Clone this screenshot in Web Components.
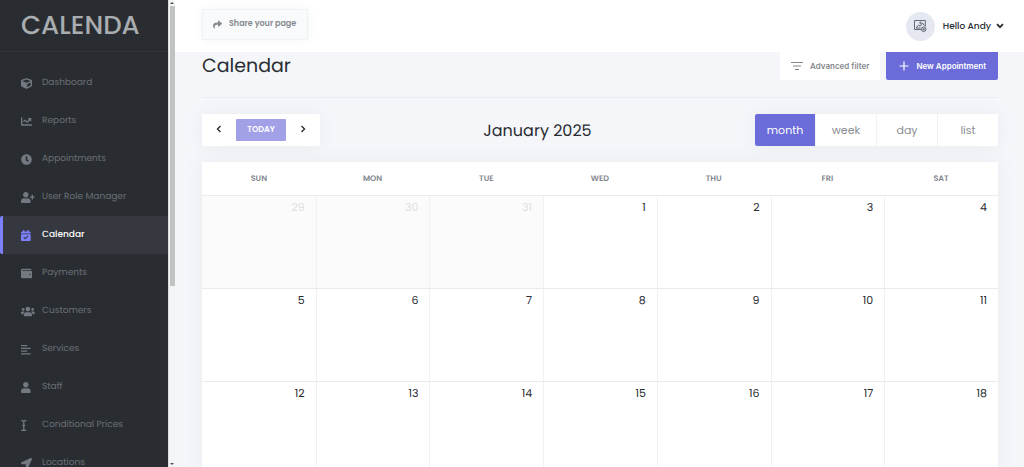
<!DOCTYPE html>
<html lang="en">
<head>
<meta charset="utf-8">
<meta name="viewport" content="width=device-width, initial-scale=1">
<title>Calendar</title>
<style>
    body {
        margin: 0;
        font-family: Poppins, Inter, "Open Sans", sans-serif;
        font-size: 9px;
        color: #292d32;
        background: #f4f6fa;
        text-rendering: geometricPrecision;
    }
</style>
</head>
<body>
<app-shell>
    <side-bar slot="sidebar">
        <nav-item icon="cube">Dashboard</nav-item>
        <nav-item icon="chart">Reports</nav-item>
        <nav-item icon="clock">Appointments</nav-item>
        <nav-item icon="userPlus">User Role Manager</nav-item>
        <nav-item icon="calendar" active>Calendar</nav-item>
        <nav-item icon="wallet">Payments</nav-item>
        <nav-item icon="users">Customers</nav-item>
        <nav-item icon="align">Services</nav-item>
        <nav-item icon="user">Staff</nav-item>
        <nav-item icon="cursor">Conditional Prices</nav-item>
        <nav-item icon="arrow">Locations</nav-item>
    </side-bar>
    <top-bar slot="header">Hello Andy</top-bar>
    <page-title>
        Calendar
        <action-button slot="actions" icon="filter">Advanced filter</action-button>
        <action-button slot="actions" icon="plus" primary>New Appointment</action-button>
    </page-title>
    <calendar-toolbar>January 2025</calendar-toolbar>
    <month-grid first="2024-12-29" month="1"></month-grid>
</app-shell>

<script>
const icons = {
    cube: ['0 0 512 512', '<path d="M239.1 6.3l-208 78c-18.7 7-31.1 25-31.1 45v225.1c0 18.2 10.3 34.8 26.5 42.9l208 104c13.5 6.8 29.4 6.8 42.9 0l208-104c16.3-8.1 26.5-24.8 26.5-42.9V129.3c0-20-12.4-37.9-31.1-44.9l-208-78C262 2.2 250 2.2 239.1 6.3zM256 68.4l192 72v1.1l-192 78-192-78v-1.1l192-72zm32 356V275.5l160-65v133.9l-160 80z"/>'],
    chart: ['0 0 512 512', '<path d="M496 384H64V80c0-8.84-7.16-16-16-16H16C7.16 64 0 71.16 0 80v336c0 17.67 14.33 32 32 32h464c8.84 0 16-7.16 16-16v-32c0-8.84-7.16-16-16-16zM464 96H345.94c-21.38 0-32.09 25.85-16.97 40.97l32.4 32.4L288 242.75l-73.37-73.37c-12.5-12.5-32.76-12.5-45.25 0l-68.69 68.69c-6.25 6.25-6.25 16.38 0 22.63l22.62 22.62c6.25 6.25 16.38 6.25 22.63 0L192 237.25l73.37 73.37c12.5 12.5 32.76 12.5 45.25 0l96-96 32.4 32.4c15.12 15.12 40.97 4.41 40.97-16.97V112c.01-8.84-7.15-16-15.99-16z"/>'],
    clock: ['0 0 512 512', '<path d="M256 8C119 8 8 119 8 256s111 248 248 248 248-111 248-248S393 8 256 8zm57.1 350.1L224.9 294c-3.1-2.3-4.9-5.9-4.9-9.7V116c0-6.6 5.4-12 12-12h48c6.6 0 12 5.4 12 12v137.7l63.5 46.2c5.4 3.9 6.5 11.4 2.6 16.8l-28.2 38.8c-3.9 5.3-11.4 6.5-16.8 2.6z"/>'],
    userPlus: ['0 0 640 512', '<path d="M624 208h-64v-64c0-8.8-7.2-16-16-16h-32c-8.8 0-16 7.2-16 16v64h-64c-8.8 0-16 7.2-16 16v32c0 8.8 7.2 16 16 16h64v64c0 8.8 7.2 16 16 16h32c8.8 0 16-7.2 16-16v-64h64c8.8 0 16-7.2 16-16v-32c0-8.8-7.2-16-16-16zm-400 48c70.7 0 128-57.3 128-128S294.7 0 224 0 96 57.3 96 128s57.3 128 128 128zm89.6 32h-16.7c-22.2 10.2-46.9 16-72.9 16s-50.6-5.8-72.9-16h-16.7C60.2 288 0 348.2 0 422.4V464c0 26.5 21.5 48 48 48h352c26.5 0 48-21.5 48-48v-41.6c0-74.2-60.2-134.4-134.4-134.4z"/>'],
    calendar: ['0 0 448 512', '<path fill-rule="evenodd" d="M436 160H12c-6.6 0-12-5.4-12-12v-36c0-26.5 21.5-48 48-48h48V12c0-6.6 5.4-12 12-12h40c6.6 0 12 5.4 12 12v52h128V12c0-6.6 5.4-12 12-12h40c6.6 0 12 5.4 12 12v52h48c26.5 0 48 21.5 48 48v36c0 6.6-5.4 12-12 12zM12 192h424c6.6 0 12 5.4 12 12v260c0 26.5-21.5 48-48 48H48c-26.5 0-48-21.5-48-48V204c0-6.6 5.4-12 12-12zm92 156l90 92 152-150-36-36-116 114-54-56z"/>'],
    wallet: ['0 0 512 512', '<path d="M461.2 128H80c-8.8 0-16-7.2-16-16s7.2-16 16-16h384c8.8 0 16-7.2 16-16 0-26.5-21.5-48-48-48H64C28.7 32 0 60.7 0 96v320c0 35.4 28.7 64 64 64h397.2c28 0 50.8-21.5 50.8-48V176c0-26.5-22.8-48-50.8-48zM416 336c-17.7 0-32-14.3-32-32s14.3-32 32-32 32 14.3 32 32-14.3 32-32 32z"/>'],
    users: ['0 0 640 512', '<circle cx="96" cy="160" r="64"/><circle cx="544" cy="160" r="64"/><circle cx="320" cy="144" r="112"/><path d="M64 256h64c18 0 34 7 45 19-40 22-68 61-75 109H32c-18 0-32-14-32-32v-32c0-35 29-64 64-64zM576 256h-64c-18 0-34 7-45 19 40 22 68 61 75 109h66c18 0 32-14 32-32v-32c0-35-29-64-64-64zM243 288h154c64 0 115 52 115 115v29c0 27-21 48-48 48H176c-27 0-48-21-48-48v-29c0-63 51-115 115-115z"/>'],
    align: ['0 0 448 512', '<path d="M0 44h288v64H0zM0 172h448v64H0zM0 300h288v64H0zM0 428h448v64H0z"/>'],
    user: ['0 0 448 512', '<path d="M224 256c70.7 0 128-57.3 128-128S294.7 0 224 0 96 57.3 96 128s57.3 128 128 128zm89.6 32h-16.7c-22.2 10.2-46.9 16-72.9 16s-50.6-5.8-72.9-16h-16.7C60.2 288 0 348.2 0 422.4V464c0 26.5 21.5 48 48 48h352c26.5 0 48-21.5 48-48v-41.6c0-74.2-60.2-134.4-134.4-134.4z"/>'],
    cursor: ['0 0 256 512', '<path fill="none" stroke="currentColor" stroke-width="62" d="M8 32h50c38 0 70 18 70 50 0-32 32-50 70-50h50M128 80v352M8 480h50c38 0 70-18 70-50 0 32 32 50 70 50h50M66 256h124"/>'],
    arrow: ['0 0 512 512', '<path d="M444.5 3.5L28.7 195.4c-48 22.4-32 92.8 19.2 92.8h175.9v175.9c0 51.2 70.4 67.2 92.8 19.2l191.9-415.8c16-38.4-25.6-80-64-64z"/>'],
    share: ['0 0 512 512', '<path d="M503.7 189.8L327.7 37.9C312.3 24.5 288 35.3 288 56v80.1C127.4 137.9 0 170.1 0 322.3c0 61.4 39.6 122.3 83.3 154.1 13.7 9.9 33.1-2.5 28.1-18.6C66.1 312.8 132.9 274.3 288 272.1V360c0 20.7 24.3 31.5 39.7 18.2l176-152c11.1-9.6 11.1-26.8 0-36.4z"/>'],
    filter: ['0 0 12 10', '<path fill="none" stroke="currentColor" d="M0 1.5h12M2 5h8M4 8.5h4"/>'],
    plus: ['0 0 10 10', '<path fill="none" stroke="currentColor" stroke-width="1.2" d="M5 .5v9M.5 5h9"/>'],
    left: ['0 0 6 8', '<path fill="none" stroke="currentColor" stroke-width="1.4" d="M4.5 1L1.5 4l3 3"/>'],
    right: ['0 0 6 8', '<path fill="none" stroke="currentColor" stroke-width="1.4" d="M1.5 1l3 3-3 3"/>'],
    down: ['0 0 8 6', '<path fill="none" stroke="currentColor" stroke-width="1.8" d="M1 1.2l3 3 3-3"/>'],
    picture: ['0 0 14 14', '<g fill="none" stroke="currentColor" stroke-width=".9"><path d="M8 10.5H1.5v-9h10.8v6M3 9l2.7-3 1.5 1.2L9.5 4l1.8 2.5M3 9h4.5"/><circle cx="7.5" cy="3.8" r=".8"/><circle cx="10.7" cy="10.2" r="2.3"/><path d="M10.7 9v2.4M9.5 10.2h2.4"/></g>']
};

function icon(name, size = 11) {
    const [box, shape] = icons[name];
    return `<svg viewBox="${box}" height="${size}" fill="currentColor" aria-hidden="true">${shape}</svg>`;
}

class AppShell extends HTMLElement {
    constructor() {
        super();
        this.attachShadow({ mode: 'open' });
        this.shadowRoot.innerHTML = `
            <style>
                :host {
                    display: grid;
                    grid-template-columns: 175px minmax(0, 1fr);
                    height: 100vh;
                    overflow: hidden;
                }
                .page {
                    display: flex;
                    flex-direction: column;
                    min-height: 0;
                }
                main {
                    flex: 1;
                    min-height: 0;
                    overflow: hidden;
                    padding: 0 26px 0 27px;
                }
            </style>
            <slot name="sidebar"></slot>
            <div class="page">
                <slot name="header"></slot>
                <main><slot></slot></main>
            </div>
        `;
    }
}

class SideBar extends HTMLElement {
    constructor() {
        super();
        this.attachShadow({ mode: 'open' });
        this.shadowRoot.innerHTML = `
            <style>
                :host {
                    display: grid;
                    grid-template-columns: minmax(0, 1fr) 7px;
                    min-height: 0;
                    overflow: hidden;
                    background: #292d32;
                }
                .menu {
                    min-height: 0;
                    overflow: hidden;
                }
                .logo {
                    box-sizing: border-box;
                    height: 52px;
                    padding-left: 21px;
                    border-bottom: 1px solid #30343a;
                    color: #a9adb0;
                    font-size: 26px;
                    font-weight: 500;
                    line-height: 52px;
                }
                nav {
                    padding-top: 12px;
                }
                .track {
                    display: flex;
                    flex-direction: column;
                    align-items: center;
                    justify-content: space-between;
                    background: #f3f4f5;
                    border-left: 1px solid #dcdddd;
                    color: #505050;
                }
                .thumb {
                    width: 5px;
                    height: 60%;
                    background: #c1c3c3;
                    margin: 2px 0 auto;
                }
                .up, .down {
                    border: 2px solid transparent;
                }
                .up {
                    border-top: 0;
                    border-bottom-color: currentColor;
                    margin-top: 2px;
                }
                .down {
                    border-bottom: 0;
                    border-top-color: currentColor;
                    margin-bottom: 2px;
                }
            </style>
            <div class="menu">
                <div class="logo">CALENDA</div>
                <nav><slot></slot></nav>
            </div>
            <div class="track">
                <span class="up"></span>
                <span class="thumb"></span>
                <span class="down"></span>
            </div>
        `;
    }
}

class NavItem extends HTMLElement {
    constructor() {
        super();
        this.attachShadow({ mode: 'open' });
        this.shadowRoot.innerHTML = `
            <style>
                :host {
                    display: block;
                    color: #6b6f76;
                    line-height: 10px;
                }
                a {
                    display: grid;
                    grid-template-columns: 14px 1fr;
                    align-items: center;
                    gap: 7px;
                    height: 38px;
                    padding-left: 21px;
                    color: inherit;
                    text-decoration: none;
                    white-space: nowrap;
                }
                svg {
                    color: #747880;
                }
                :host([active]) a {
                    padding-left: 18px;
                    border-left: 3px solid #7d80fb;
                    border-radius: 2px 0 0 2px;
                    background: #35383f;
                    color: #fff;
                    font-weight: 500;
                }
                :host([active]) svg {
                    color: #7d80fb;
                }
            </style>
            <a href="#">${icon(this.getAttribute('icon'))}<span><slot></slot></span></a>
        `;
    }
}

class TopBar extends HTMLElement {
    constructor() {
        super();
        this.attachShadow({ mode: 'open' });
        this.shadowRoot.innerHTML = `
            <style>
                :host {
                    display: flex;
                    align-items: center;
                    justify-content: space-between;
                    height: 52px;
                    padding: 0 20px 0 27px;
                    background: #fff;
                    flex: none;
                }
                button {
                    display: flex;
                    align-items: center;
                    font: inherit;
                    border: 0;
                    padding: 0;
                    background: none;
                    color: inherit;
                }
                .share {
                    gap: 7px;
                    height: 31px;
                    padding: 0 11px 0 10px;
                    margin-bottom: 4px;
                    border: 1px solid #eff2f3;
                    background: #f8fafb;
                    color: #868b90;
                    font-size: 8px;
                    font-weight: 600;
                    box-shadow: 0 0 12px #f3f5f6;
                }
                .user {
                    gap: 8px;
                    color: #292d32;
                }
                .avatar {
                    display: grid;
                    place-items: center;
                    width: 29px;
                    height: 29px;
                    border-radius: 50%;
                    background: #e5e8f1;
                    color: #555a62;
                }
                .name {
                    display: flex;
                    align-items: center;
                    gap: 5px;
                    font-weight: 500;
                }
            </style>
            <button class="share">${icon('share', 9)}Share your page</button>
            <button class="user">
                <span class="avatar">${icon('picture', 14)}</span>
                <span class="name"><slot></slot>${icon('down', 6)}</span>
            </button>
        `;
    }
}

class PageTitle extends HTMLElement {
    constructor() {
        super();
        this.attachShadow({ mode: 'open' });
        this.shadowRoot.innerHTML = `
            <style>
                :host {
                    display: flex;
                    justify-content: space-between;
                    height: 45px;
                    border-bottom: 1px solid #e9ecf1;
                }
                h1 {
                    margin: 0;
                    font-size: 19px;
                    font-weight: 400;
                    line-height: 28px;
                }
                .actions {
                    display: flex;
                    align-items: flex-start;
                    gap: 6px;
                }
            </style>
            <h1><slot></slot></h1>
            <div class="actions"><slot name="actions"></slot></div>
        `;
    }
}

class ActionButton extends HTMLElement {
    constructor() {
        super();
        this.attachShadow({ mode: 'open' });
        this.shadowRoot.innerHTML = `
            <style>
                :host {
                    display: block;
                }
                button {
                    display: flex;
                    align-items: center;
                    gap: 7px;
                    height: 28px;
                    padding: 0 11px;
                    border: 0;
                    border-radius: 0 0 2px 2px;
                    background: #fff;
                    color: #85898d;
                    font-family: Inter, sans-serif;
                    font-size: 8px;
                    font-weight: 600;
                }
                :host([primary]) button {
                    padding: 0 12px 0 13px;
                    background: #6b6cd9;
                    color: #fff;
                }
            </style>
            <button>${icon(this.getAttribute('icon'), 10)}<span><slot></slot></span></button>
        `;
    }
}

class CalendarToolbar extends HTMLElement {
    constructor() {
        super();
        this.attachShadow({ mode: 'open' });
        this.shadowRoot.innerHTML = `
            <style>
                :host {
                    display: flex;
                    align-items: center;
                    justify-content: space-between;
                    padding: 16px 0;
                }
                h2 {
                    margin: 0;
                    font-size: 16px;
                    font-weight: 400;
                }
                button {
                    border: 0;
                    padding: 0;
                    background: none;
                    color: inherit;
                    font: inherit;
                }
                .group {
                    display: flex;
                    align-items: center;
                    height: 32px;
                    background: #fff;
                    border-radius: 2px;
                    box-shadow: 0 0 16px #e9ebef;
                }
                .group > .step {
                    width: 34px;
                    height: 32px;
                }
                .today {
                    width: 50px;
                    height: 22px;
                    border-radius: 1px;
                    background: #a2a0e7;
                    color: #fff;
                    font-size: 8px;
                    font-weight: 600;
                }
                .view {
                    width: 61px;
                    height: 32px;
                    border-left: 1px solid #f1f2f4;
                    color: #8a8d92;
                    font-size: 11px;
                }
                .view.on {
                    width: 60px;
                    border: 0;
                    border-radius: 2px 0 0 2px;
                    background: #6b6cd9;
                    color: #fff;
                }
            </style>
            <div class="group">
                <button class="step" aria-label="Previous">${icon('left', 8)}</button>
                <button class="today">TODAY</button>
                <button class="step" aria-label="Next">${icon('right', 8)}</button>
            </div>
            <h2><slot></slot></h2>
            <div class="group">
                <button class="view on">month</button>
                <button class="view">week</button>
                <button class="view">day</button>
                <button class="view">list</button>
            </div>
        `;
    }
}

class MonthGrid extends HTMLElement {
    constructor() {
        super();
        this.attachShadow({ mode: 'open' });
        this.shadowRoot.innerHTML = `
            <style>
                :host {
                    display: block;
                    background: #fff;
                    border-radius: 2px;
                    box-shadow: 0 0 20px #e9ebef;
                }
                table {
                    width: 100%;
                    table-layout: fixed;
                    border-collapse: separate;
                    border-spacing: 0;
                }
                th {
                    height: 33px;
                    padding: 0;
                    color: #83888f;
                    font-size: 8px;
                    font-weight: 600;
                }
                td {
                    box-sizing: border-box;
                    height: 93px;
                    padding: 4px 11px 0 0;
                    border-top: 1px solid #e8eaec;
                    border-left: 1px solid #f0f1f3;
                    font-size: 11px;
                    line-height: 14px;
                    text-align: right;
                    vertical-align: top;
                }
                td:first-child {
                    border-left: 0;
                }
                td.other {
                    background: #fbfbfb;
                    color: #dedfe0;
                }
            </style>
            <table>
                <thead><tr></tr></thead>
                <tbody></tbody>
            </table>
        `;
        this.render();
    }

    render() {
        const head = this.shadowRoot.querySelector('thead tr');
        ['SUN', 'MON', 'TUE', 'WED', 'THU', 'FRI', 'SAT'].forEach(name => {
            const th = document.createElement('th');
            th.textContent = name;
            head.appendChild(th);
        });

        const [year, month, day] = this.getAttribute('first').split('-').map(Number);
        const body = this.shadowRoot.querySelector('tbody');
        for (let week = 0; week < 3; week++) {
            const row = body.insertRow();
            for (let i = 0; i < 7; i++) {
                const date = new Date(year, month - 1, day + week * 7 + i);
                const cell = row.insertCell();
                cell.textContent = date.getDate();
                cell.classList.toggle('other', date.getMonth() + 1 !== Number(this.getAttribute('month')));
            }
        }
    }
}

customElements.define('app-shell', AppShell);
customElements.define('side-bar', SideBar);
customElements.define('nav-item', NavItem);
customElements.define('top-bar', TopBar);
customElements.define('page-title', PageTitle);
customElements.define('action-button', ActionButton);
customElements.define('calendar-toolbar', CalendarToolbar);
customElements.define('month-grid', MonthGrid);
</script>
</body>
</html>
